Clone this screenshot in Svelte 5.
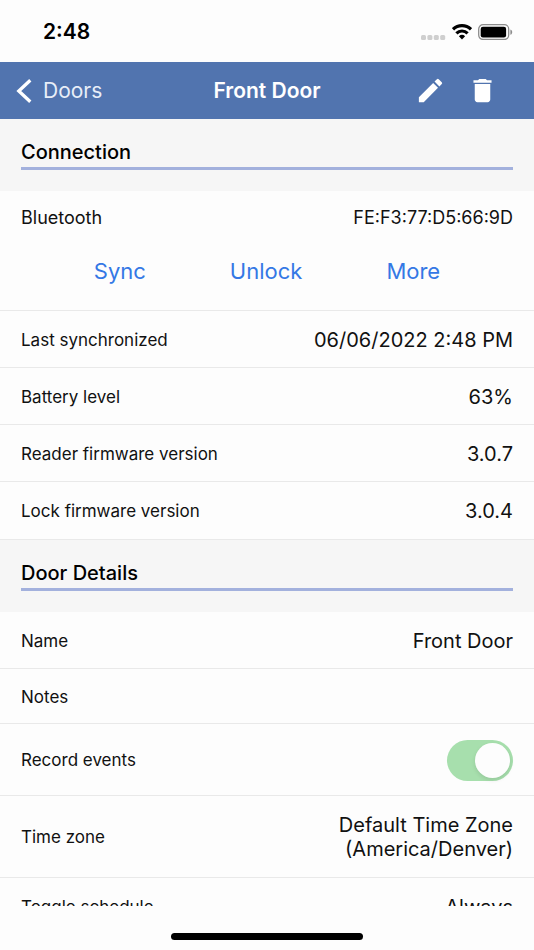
<script lang="ts">
	type Row = { label: string; value: string };

	let recordEvents = true;

	const connection: Row[] = [
		{ label: 'Last synchronized', value: '06/06/2022 2:48 PM' },
		{ label: 'Battery level', value: '63%' },
		{ label: 'Reader firmware version', value: '3.0.7' },
		{ label: 'Lock firmware version', value: '3.0.4' }
	];
	const actions = ['Sync', 'Unlock', 'More'];
</script>

<div class="screen">
	<div class="status">
		<span class="time">2:48</span>
		<svg class="signal" width="26" height="6" viewBox="0 0 26 6" aria-hidden="true">
			<rect x="1" y="1" width="5" height="5" rx="1.5" />
			<rect x="7.4" y="1" width="5" height="5" rx="1.5" />
			<rect x="13.8" y="1" width="5" height="5" rx="1.5" />
			<rect x="20.2" y="1" width="5" height="5" rx="1.5" />
		</svg>
		<svg width="20" height="16" viewBox="0 0 20 16" aria-hidden="true">
			<g fill="none" stroke="#000" stroke-width="3.2">
				<path d="M1 5.3a12.8 12.8 0 0 1 18 0" />
				<path d="M4.4 9.3a8 8 0 0 1 11.2 0" />
			</g>
			<path d="M6.9 12.3a4.5 4.5 0 0 1 6.2 0L10 15.6z" />
		</svg>
		<svg width="35" height="16" viewBox="0 0 35 16" aria-hidden="true">
			<rect x="0.7" y="0.7" width="30" height="14.8" rx="4.4" fill="none" stroke="#8c8c8c" stroke-width="1.3" />
			<rect x="2.7" y="2.7" width="25.4" height="10.8" rx="2.2" />
			<path d="M32.4 5.4c2.4.8 2.4 4.6 0 5.4z" fill="#8c8c8c" />
		</svg>
	</div>

	<header>
		<button class="back">
			<svg width="17" height="26" viewBox="0 0 17 26" aria-hidden="true">
				<path d="M14.3 2.2 2.8 13l11.5 10.8" fill="none" stroke="#fff" stroke-width="3.3" />
			</svg>
			Doors
		</button>
		<h1>Front Door</h1>
		<div class="tools">
			<button class="tool" aria-label="Edit door">
				<svg width="31" height="31" viewBox="0 0 24 24" fill="#fff">
					<path d="M3 17.25V21h3.75L17.81 9.94l-3.75-3.75zM20.71 7.04a1 1 0 0 0 0-1.41l-2.34-2.34a1 1 0 0 0-1.41 0l-1.83 1.83 3.75 3.75z" />
				</svg>
			</button>
			<button class="tool" aria-label="Delete door">
				<svg width="31" height="31" viewBox="0 0 24 24" fill="#fff">
					<path d="M6 19c0 1.1.9 2 2 2h8c1.1 0 2-.9 2-2V7H6zM19 4h-3.5l-1-1h-5l-1 1H5v2h14z" />
				</svg>
			</button>
		</div>
	</header>

	<main>
		<section>
			<div class="section-head"><h2>Connection</h2></div>
			<div class="device">
				<div class="address">
					<span>Bluetooth</span>
					<span>FE:F3:77:D5:66:9D</span>
				</div>
				<div class="actions">
					{#each actions as action}
						<button>{action}</button>
					{/each}
				</div>
			</div>
			{#each connection as row}
				<div class="row">
					<span>{row.label}</span>
					<span class="value">{row.value}</span>
				</div>
			{/each}
		</section>

		<section>
			<div class="section-head"><h2>Door Details</h2></div>
			<div class="row">
				<span>Name</span>
				<span class="value">Front Door</span>
			</div>
			<div class="row notes">
				<span>Notes</span>
			</div>
			<div class="row record">
				<label for="record-events">Record events</label>
				<input id="record-events" type="checkbox" role="switch" bind:checked={recordEvents} />
			</div>
			<div class="row zone">
				<span>Time zone</span>
				<span class="value">Default Time Zone<br />(America/Denver)</span>
			</div>
			<div class="row">
				<span>Toggle schedule</span>
				<span class="value">Always</span>
			</div>
		</section>
	</main>

	<div class="home"><span></span></div>
</div>

<style>
	:global(body) {
		margin: 0;
		background: #fdfdfd;
	}

	.screen {
		display: flex;
		flex-direction: column;
		height: 100vh;
		overflow: hidden;
		color: #111;
		font-family: Inter, 'Liberation Sans', sans-serif;
		font-size: 18px;
		line-height: 24px;
	}

	button {
		padding: 0;
		border: 0;
		background: none;
		color: inherit;
		font: inherit;
		cursor: pointer;
	}

	svg {
		display: block;
	}

	.status {
		display: flex;
		flex: none;
		align-items: center;
		gap: 6px;
		height: 62px;
		padding: 2px 21px 0 43px;
		box-sizing: border-box;
	}

	.time {
		flex: 1;
		color: #000;
		font-size: 21px;
		font-weight: 600;
	}

	.signal {
		margin-top: 9px;
		fill: #cfcfcf;
	}

	header {
		display: grid;
		flex: none;
		grid-template-columns: 1fr auto 1fr;
		align-items: center;
		height: 57px;
		padding: 0 36px 0 16px;
		background: #5174af;
		color: #fff;
		font-size: 21px;
	}

	.back {
		display: flex;
		align-items: center;
		gap: 10px;
		color: #e8eef8;
	}

	h1 {
		margin: 0 0 0 20px;
		font-size: 21px;
		font-weight: 600;
	}

	.tools {
		display: flex;
		justify-content: flex-end;
		gap: 21px;
	}

	main {
		flex: 1;
		min-height: 0;
		overflow: hidden;
	}

	.section-head {
		height: 72px;
		padding: 21px 21px 0;
		background: #f6f6f6;
		box-sizing: border-box;
	}

	h2 {
		margin: 0;
		padding-bottom: 2px;
		border-bottom: 3px solid #a3b1dd;
		color: #000;
		font-size: 20px;
		font-weight: 500;
		line-height: 25px;
	}

	.device {
		padding: 15px 21px 25px;
		border-bottom: 1px solid #e9e9e9;
	}

	.address {
		display: flex;
		justify-content: space-between;
	}

	.actions {
		display: flex;
		justify-content: center;
		gap: 84px;
		margin-top: 27px;
		color: #3478e5;
		font-size: 22px;
		line-height: 28px;
	}

	.row {
		display: flex;
		align-items: center;
		justify-content: space-between;
		min-height: 57px;
		padding: 1px 21px 0;
		border-bottom: 1px solid #e9e9e9;
		box-sizing: border-box;
		font-size: 17px;
	}

	section:first-child .row:last-child {
		min-height: 58px;
	}

	.value {
		font-size: 20px;
		text-align: right;
	}

	.row.notes {
		min-height: 55px;
	}

	.row.record {
		min-height: 72px;
	}

	.row.zone {
		min-height: 82px;
	}

	input {
		display: flex;
		justify-content: flex-start;
		align-items: center;
		width: 66px;
		height: 41px;
		margin: 0;
		padding: 3px;
		border-radius: 21px;
		background: #ddd;
		box-sizing: border-box;
		appearance: none;
		cursor: pointer;
	}

	input::before {
		width: 35px;
		height: 35px;
		border-radius: 50%;
		background: #fdfdfd;
		box-shadow: 0 2px 4px rgba(0, 0, 0, 0.1);
		content: '';
	}

	input:checked {
		justify-content: flex-end;
		background: #a7dfad;
	}

	.home {
		display: flex;
		flex: none;
		justify-content: center;
		align-items: flex-end;
		height: 44px;
		padding-bottom: 10px;
		box-sizing: border-box;
	}

	.home span {
		width: 36%;
		height: 7px;
		border-radius: 4px;
		background: #000;
	}
</style>
